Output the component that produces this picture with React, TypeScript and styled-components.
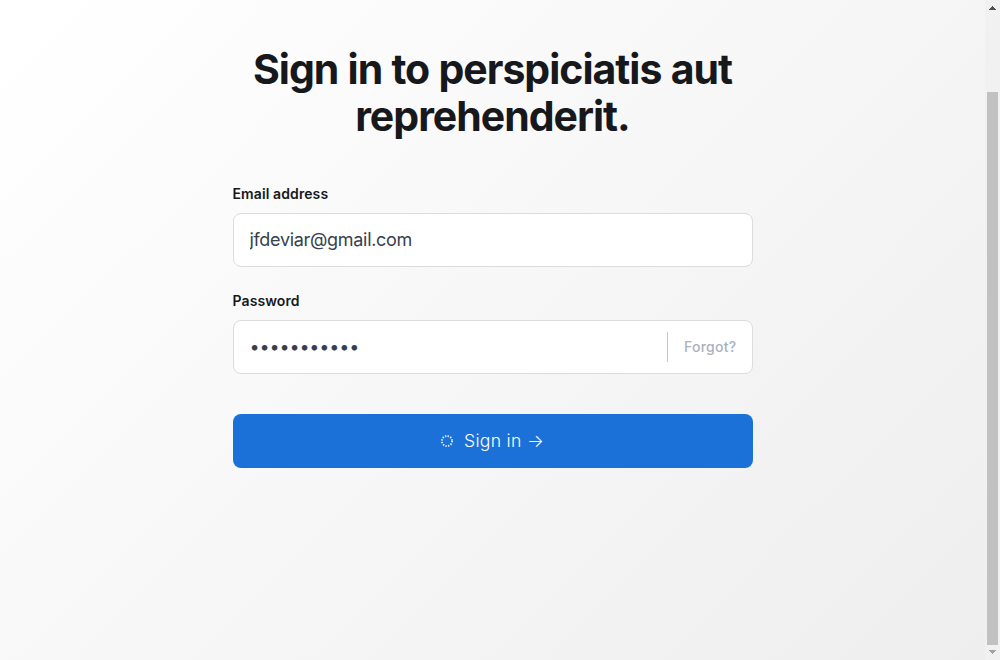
import React from "react";
import styled, { createGlobalStyle } from "styled-components";

const Global = createGlobalStyle`
  * { box-sizing: border-box; }
  body { margin: 0; overflow: hidden; font-family: Inter, "Liberation Sans", sans-serif; }
`;

const Page = styled.div`
  display: flex;
  height: 660px;
  width: 1000px;
`;

const Main = styled.main`
  flex: 1;
  display: flex;
  flex-direction: column;
  align-items: center;
  padding-top: 46px;
  background: linear-gradient(135deg, #fff 3%, #eee 100%);
`;

const Title = styled.h1`
  margin: 0 0 43px;
  width: 520px;
  font-size: 41px;
  line-height: 47px;
  font-weight: 700;
  letter-spacing: -1px;
  word-spacing: 0.5px;
  text-align: center;
  color: #16181b;
`;

const Form = styled.form`
  width: 520px;
  display: flex;
  flex-direction: column;
`;

const Label = styled.label`
  font-size: 14px;
  line-height: 21px;
  font-weight: 600;
  letter-spacing: 0.1px;
  color: #16181b;
  margin-bottom: 9px;
`;

const Field = styled.div`
  display: flex;
  align-items: center;
  height: 54px;
  margin-bottom: 23px;
  padding: 0 15px 0 16px;
  background: #fff;
  border: 1px solid #dcdcdf;
  border-radius: 8px;
`;

const Input = styled.input`
  flex: 1;
  min-width: 0;
  border: 0;
  padding: 0;
  outline: 0;
  background: transparent;
  font: 400 18px/28px Inter, sans-serif;
  letter-spacing: ${(p) => (p.type === "password" ? "-0.15px" : "-0.31px")};
  color: #36414c;
`;

const Forgot = styled.a`
  border-left: 1px solid #c4c7cc;
  height: 30px;
  padding-left: 16px;
  font-size: 14px;
  line-height: 30px;
  font-weight: 500;
  letter-spacing: 0.28px;
  color: #a8b2be;
`;

const Submit = styled.button`
  margin-top: 17px;
  height: 54px;
  display: flex;
  align-items: center;
  justify-content: center;
  gap: 10px;
  padding: 0 7px 0 6px;
  border: 0;
  border-radius: 8px;
  background: #1c71d8;
  color: #fff;
  font: 300 17.6px/28px Inter, sans-serif;
  letter-spacing: 0.3px;
`;

const Scrollbar = styled.div`
  width: 15px;
  display: flex;
  flex-direction: column;
  align-items: center;
  justify-content: space-between;
  background: #f1f1f1;
`;

const Thumb = styled.div`
  width: 11px;
  height: 553px;
  margin-top: 77px;
  background: #c1c1c1;
`;

const Arrow = ({ down = false }: { down?: boolean }) => (
  <svg width="15" height="15" viewBox="0 0 15 15" shapeRendering="crispEdges">
    <path
      d={down
        ? "M4 5h7v1h-1v1h-1v1h-1v1h-1v-1h-1v-1h-1v-1h-1z"
        : "M4 10h7v-1h-1v-1h-1v-1h-1v-1h-1v1h-1v1h-1v1h-1z"}
      fill={down ? "#a3a3a3" : "#505050"}
    />
  </svg>
);

export default function App() {
  return (
    <>
      <Global />
      <Page>
        <Main>
          <Title>Sign in to perspiciatis aut reprehenderit.</Title>
          <Form>
            <Label>Email address</Label>
            <Field>
              <Input type="text" defaultValue="jfdeviar@gmail.com" />
            </Field>
            <Label>Password</Label>
            <Field>
              <Input type="password" defaultValue="abcdefghijk" />
              <Forgot>Forgot?</Forgot>
            </Field>
            <Submit type="button">
              <svg width="14" height="14" viewBox="0 0 14 14">
                <circle cx="7" cy="7" r="5.1" fill="none" stroke="#fff" strokeOpacity="0.85" strokeWidth="1.9" strokeDasharray="1.4 1.27" />
              </svg>
              <span>Sign in →</span>
            </Submit>
          </Form>
        </Main>
        <Scrollbar>
          <Arrow />
          <Thumb />
          <Arrow down />
        </Scrollbar>
      </Page>
    </>
  );
}
